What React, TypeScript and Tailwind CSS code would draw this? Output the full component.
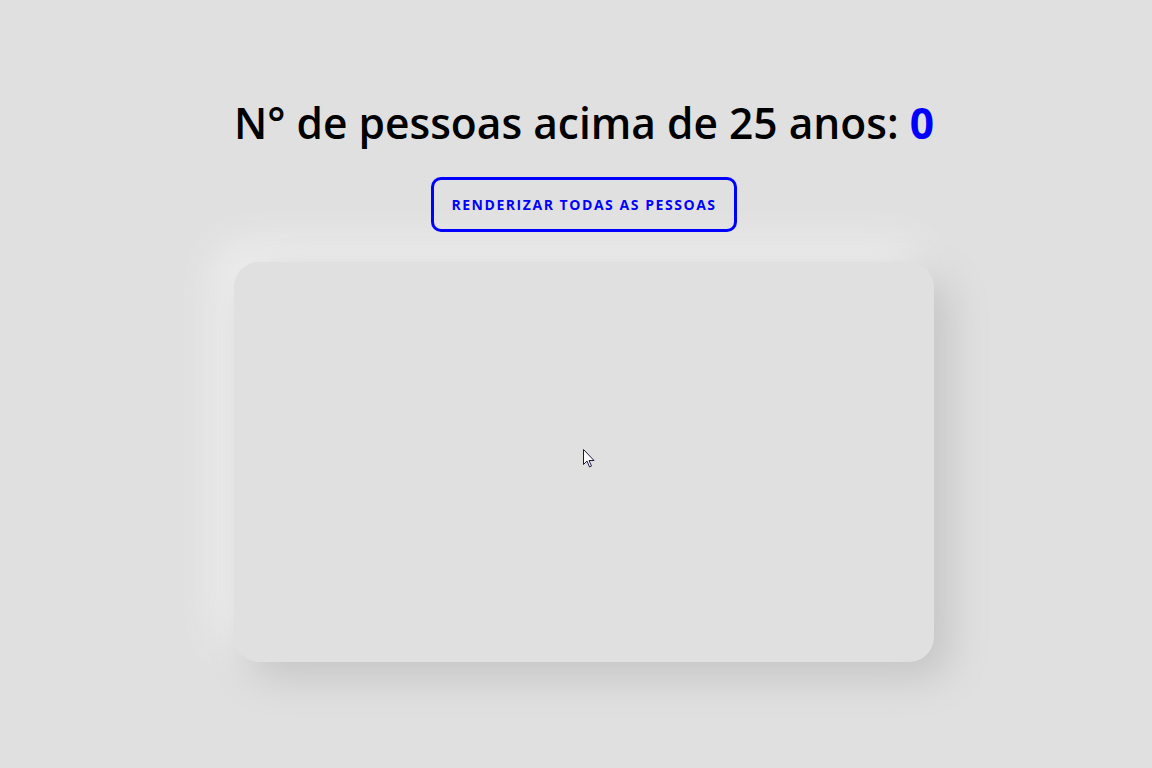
import React from 'react';

function Cursor() {
    return (
        <svg className="absolute left-[583px] top-[449px]" width="13" height="20" viewBox="0 0 13 20">
            <path d="M0.5 0.5 L0.5 15.5 L4 12 L6.5 18 L8.5 17 L6 11.5 L11 11.5 Z" fill="#ffffff" stroke="#1a1a40" strokeWidth="1" strokeLinejoin="round" />
        </svg>
    );
}

export default function App() {
    return (
        <div className="relative min-h-screen w-full bg-[#e0e0e0] flex flex-col items-center pt-[95px] pl-[16px] font-['Open_Sans',sans-serif]">
            <h1 className="text-[42.5px] leading-[56px] font-semibold text-black">
                N° de pessoas acima de 25 anos: <span className="text-[#0000ff] font-bold">0</span>
            </h1>
            <button className="relative z-10 mt-[26px] w-[306px] h-[55px] border-[3px] border-[#0000ff] rounded-[10px] text-[#0000ff] text-[14px] font-bold uppercase tracking-[1.55px]">
                Renderizar todas as pessoas
            </button>
            <div className="mt-[30px] w-[700px] h-[400px] rounded-[25px] bg-[#e0e0e0] shadow-[15px_15px_40px_#c4c4c4,-15px_-15px_40px_#f2f2f2]"></div>
            <Cursor />
        </div>
    );
}
